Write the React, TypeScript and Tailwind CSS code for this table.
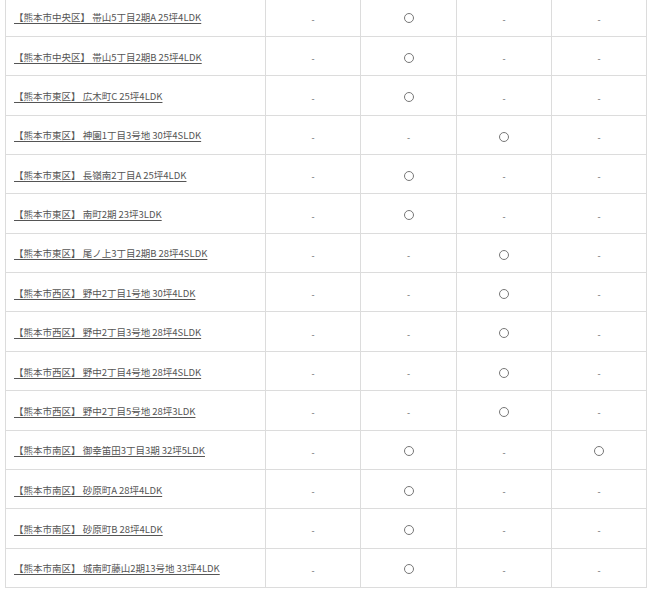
import React from "react";

const rows: [string, number][] = [
  ["【熊本市中央区】 帯山5丁目2期A 25坪4LDK", 1],
  ["【熊本市中央区】 帯山5丁目2期B 25坪4LDK", 1],
  ["【熊本市東区】 広木町C 25坪4LDK", 1],
  ["【熊本市東区】 神園1丁目3号地 30坪4SLDK", 2],
  ["【熊本市東区】 長嶺南2丁目A 25坪4LDK", 1],
  ["【熊本市東区】 南町2期 23坪3LDK", 1],
  ["【熊本市東区】 尾ノ上3丁目2期B 28坪4SLDK", 2],
  ["【熊本市西区】 野中2丁目1号地 30坪4LDK", 2],
  ["【熊本市西区】 野中2丁目3号地 28坪4SLDK", 2],
  ["【熊本市西区】 野中2丁目4号地 28坪4SLDK", 2],
  ["【熊本市西区】 野中2丁目5号地 28坪3LDK", 2],
  ["【熊本市南区】 御幸笛田3丁目3期 32坪5LDK", 13],
  ["【熊本市南区】 砂原町A 28坪4LDK", 1],
  ["【熊本市南区】 砂原町B 28坪4LDK", 1],
  ["【熊本市南区】 城南町藤山2期13号地 33坪4LDK", 1],
];

function Cell({ on }: { on: boolean }) {
  return (
    <td className="border border-[#dcdcdc] text-center align-middle text-[#666] pb-[2px]">
      {on ? (
        <span className="inline-block w-[10px] h-[10px] rounded-full border border-[#777] align-middle" />
      ) : (
        <span className="text-[9px]">-</span>
      )}
    </td>
  );
}

export default function App() {
  return (
    <div className="bg-white w-[650px] h-[589px] overflow-hidden">
      <div className="-mt-[3.4px] ml-[5px] w-[641px]">
        <table
          className="w-full border-collapse table-fixed"
          style={{ fontFamily: '"Noto Sans CJK JP", "Noto Sans", sans-serif' }}
        >
          <colgroup>
            <col className="w-[260px]" />
            <col className="w-[95px]" />
            <col className="w-[96px]" />
            <col className="w-[95px]" />
            <col className="w-[95px]" />
          </colgroup>
          <tbody>
            {rows.map(([label, flag], i) => {
              const cols = [false, flag === 1 || flag === 13, flag === 2, flag === 13];
              return (
                <tr key={i} className="h-[39.36px]">
                  <td className="border border-[#dcdcdc] pl-[8px] pb-[2px] align-middle leading-[14px]">
                    <a className="text-[9.5px] text-[#555] underline underline-offset-2 whitespace-nowrap">
                      {label}
                    </a>
                  </td>
                  {cols.map((c, j) => (
                    <Cell key={j} on={c} />
                  ))}
                </tr>
              );
            })}
          </tbody>
        </table>
      </div>
    </div>
  );
}
